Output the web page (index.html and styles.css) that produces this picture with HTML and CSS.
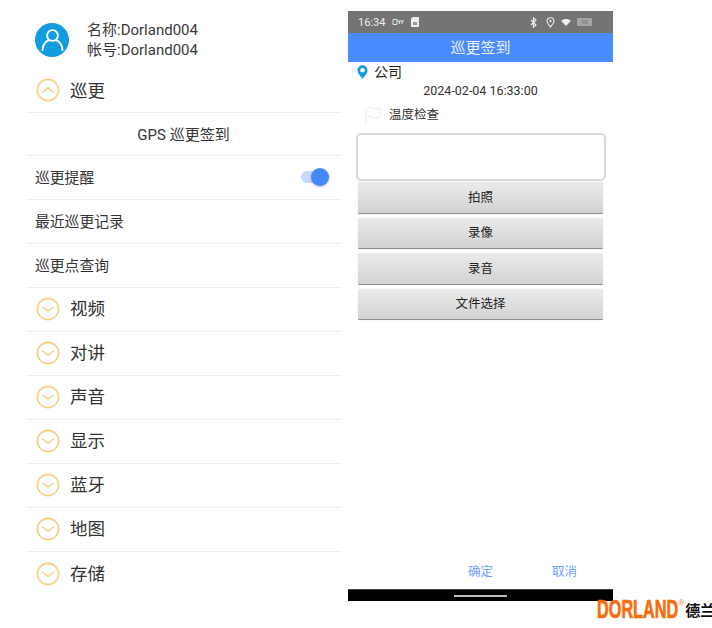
FILE: index.html
```html
<!DOCTYPE html>
<html lang="zh">
<head>
<meta charset="utf-8">
<title>巡更签到</title>
<link rel="stylesheet" href="styles.css">
</head>
<body>
<svg class="defs" width="0" height="0" aria-hidden="true">
  <symbol id="down" viewBox="0 0 24 24"><circle cx="12" cy="12" r="10.6" fill="none" stroke="#f6cf85" stroke-width="1.6"/><path d="M6.5 9.8 12 14.6l5.5-4.8" fill="none" stroke="#f6cf85" stroke-width="1.4"/></symbol>
  <symbol id="up" viewBox="0 0 24 24"><circle cx="12" cy="12" r="10.6" fill="none" stroke="#f6cf85" stroke-width="1.6"/><path d="M6.5 14.4 12 9.6l5.5 4.8" fill="none" stroke="#f6cf85" stroke-width="1.4"/></symbol>
</svg>
<main class="page">
  <section class="menu">
    <header class="profile">
      <svg class="avatar" viewBox="0 0 34 34" width="34" height="34"><circle cx="17" cy="17" r="17" fill="#129bdf"/><circle cx="17.5" cy="12.5" r="5.4" fill="none" stroke="#fff" stroke-width="1.9"/><path d="M7.5 27c.3-5.800 3.800-9.300 6.800-10M27.500 27c-.3-5.800-3.800-9.300-6.800-10" fill="none" stroke="#fff" stroke-width="1.9" stroke-linecap="round"/></svg>
      <div class="account">
        <div>名称:Dorland004</div>
        <div>帐号:Dorland004</div>
      </div>
    </header>
    <div class="group first"><svg class="chev"><use href="#up"/></svg><span>巡更</span></div>
    <div class="item center">GPS 巡更签到</div>
    <div class="item">巡更提醒<span class="switch"><i></i></span></div>
    <div class="item">最近巡更记录</div>
    <div class="item">巡更点查询</div>
    <div class="group"><svg class="chev"><use href="#down"/></svg><span>视频</span></div>
    <div class="group"><svg class="chev"><use href="#down"/></svg><span>对讲</span></div>
    <div class="group"><svg class="chev"><use href="#down"/></svg><span>声音</span></div>
    <div class="group"><svg class="chev"><use href="#down"/></svg><span>显示</span></div>
    <div class="group"><svg class="chev"><use href="#down"/></svg><span>蓝牙</span></div>
    <div class="group"><svg class="chev"><use href="#down"/></svg><span>地图</span></div>
    <div class="group last"><svg class="chev"><use href="#down"/></svg><span>存储</span></div>
  </section>

  <section class="phone">
    <div class="status">
      <span class="time">16:34</span>
      <svg class="st-key" width="13" height="8" viewBox="0 0 13 8"><path d="M1 1.500h4v5H1zM5 3h7M7.500 3v3M10 3v3" fill="none" stroke="#e4e4e4" stroke-width="1"/></svg>
      <svg class="st-sim" width="8" height="10" viewBox="0 0 8 10"><path d="M0 1.500 1.500 0H8v10H0z" fill="#ececec"/><path d="M2 5h4v3H2z" fill="#9a9a9a"/></svg>
      <span class="grow"></span>
      <svg class="st-bt" width="7" height="11" viewBox="0 0 7 11"><path d="M1 3l5 5-2.500 2.200V.8L6 3 1 8" fill="none" stroke="#eee" stroke-width="1.100"/></svg>
      <svg width="9" height="11" viewBox="0 0 9 11"><path d="M4.500 10C2.500 7.500 1 6 1 4.200a3.500 3.500 0 0 1 7 0C8 6 6.500 7.500 4.500 10z" fill="none" stroke="#eee" stroke-width="1.100"/><circle cx="4.500" cy="4.200" r="1.100" fill="#eee"/></svg>
      <svg width="10" height="7" viewBox="0 0 11 8"><path d="M0 2.200C3 -.6 8 -.6 11 2.200L5.500 8z" fill="#eee"/></svg>
      <span class="battery">90</span>
    </div>
    <div class="titlebar">巡更签到</div>
    <div class="place">
      <svg width="11" height="14" viewBox="0 0 11 14"><path d="M5.500 14C2.500 10.200.5 8 .5 5.300a5 5 0 0 1 10 0C10.500 8 8.500 10.200 5.500 14z" fill="#129bdf"/><circle cx="5.500" cy="5.200" r="2.300" fill="#fff"/></svg>
      <span>公司</span>
    </div>
    <div class="datetime">2024-02-04 16:33:00</div>
    <div class="task">
      <svg width="18" height="18" viewBox="0 0 18 20"><path d="M1 20V2c3-2.200 6-1 8-.2s5 1.200 8-.2v9.500c-3 1.400-6 1-8 .2s-5-1.800-8 .4" fill="none" stroke="#eeeeee" stroke-width="1.200"/></svg>
      <span>温度检查</span>
    </div>
    <div class="note"></div>
    <div class="actions">
      <button class="btn">拍照</button>
      <button class="btn">录像</button>
      <button class="btn">录音</button>
      <button class="btn">文件选择</button>
    </div>
    <div class="footer">
      <span class="link">确定</span>
      <span class="link">取消</span>
    </div>
    <div class="navbar"><i></i></div>
  </section>
</main>
<div class="logo"><span class="brand">DORLAND</span><sup class="reg">®</sup><span class="cn">德兰</span></div>
</body>
</html>
```
FILE: styles.css
```css
* { box-sizing: border-box; }
html, body { margin: 0; padding: 0; }
body {
  width: 712px;
  height: 628px;
  overflow: hidden;
  position: relative;
  background: #fff;
  font-family: Roboto, "Noto Sans CJK SC", sans-serif;
  color: #333;
}
.defs { position: absolute; }
.page { display: flex; align-items: flex-start; }

.menu { width: 315px; margin-left: 26px; flex: none; }
.profile {
  height: 68px;
  display: flex;
  align-items: center;
  padding: 12px 0 0 9px;
  gap: 18px;
}
.avatar { flex: none; }
.account { font-size: 15px; line-height: 20px; color: #3a3a3a; }

.group, .item {
  height: 44px;
  display: flex;
  align-items: center;
  padding-bottom: 2px;
  border-bottom: 1px solid #eeeeee;
}
.group { padding-left: 10px; gap: 10px; font-size: 17.500px; color: #333; }
.group span { margin-top: -2px; }
.group.first { height: 45px; padding-bottom: 0; }
.group.last { border-bottom: none; padding-bottom: 1px; }
.chev { width: 24px; height: 24px; flex: none; }
.item { padding-left: 9px; padding-right: 12px; font-size: 14.800px; color: #333; justify-content: space-between; }
.item.center { height: 43px; justify-content: center; padding: 0 0 2px; font-size: 15px; }

.switch {
  position: relative;
  width: 28px;
  height: 12px;
  border-radius: 6px;
  background: #c3d9fd;
  display: block;
}
.switch i {
  position: absolute;
  right: 0;
  top: -3px;
  width: 18px;
  height: 18px;
  border-radius: 50%;
  background: #4588f8;
  box-shadow: 0 1px 2px rgba(0,0,0,.3);
}

.phone {
  width: 265px;
  height: 590px;
  margin: 11px 0 0 7px;
  flex: none;
  display: flex;
  flex-direction: column;
  position: relative;
}
.status {
  height: 22px;
  background: #747474;
  color: #eee;
  display: flex;
  align-items: center;
  padding: 0 21px 0 10px;
  gap: 6px;
  flex: none;
}
.time { font-size: 11px; margin-right: 1px; }
.grow { flex: 1; }
.status svg { flex: none; }
.st-bt { margin-right: 3px; }
.battery {
  width: 15px;
  height: 8px;
  background: #a5a5a5;
  color: #777;
  font-size: 6px;
  line-height: 8px;
  text-align: center;
  border-radius: 1px;
}
.titlebar {
  height: 29px;
  background: #4a8cff;
  color: #e9f1ff;
  font-size: 15px;
  line-height: 30px;
  text-align: center;
  flex: none;
}
.place {
  display: flex;
  align-items: center;
  gap: 6px;
  padding-left: 9px;
  height: 18px;
  font-size: 14px;
  color: #222;
  flex: none;
}
.place svg { margin-top: 1px; }
.datetime { margin-top: 2px; font-size: 12.500px; line-height: 18px; text-align: center; color: #333; flex: none; }
.task {
  display: flex;
  align-items: center;
  gap: 7px;
  margin: 1px 0 0 16px;
  height: 24px;
  font-size: 12.500px;
  color: #333;
  flex: none;
}
.task svg { margin-top: 6px; }
.note {
  margin: 8px 0 0 8px;
  width: 250px;
  height: 48px;
  background: #fff;
  border: 2px solid #d8d8d8;
  border-radius: 5px;
  flex: none;
}
.actions { display: flex; flex-direction: column; gap: 4px; margin: 1px 0 0 10px; width: 245px; }
.btn {
  height: 31.500px;
  border: none;
  border-bottom: 1px solid #8e8e8e;
  border-radius: 1px;
  background: linear-gradient(#ebebeb, #d2d2d2);
  box-shadow: 0 0 1px rgba(0,0,0,.25);
  font: 12.500px Roboto, "Noto Sans CJK SC", sans-serif;
  color: #222;
  padding: 0 0 2px;
}
.footer {
  margin-top: auto;
  height: 36px;
  display: flex;
  padding: 0 36px 0 120px;
  justify-content: space-between;
  align-items: center;
  flex: none;
}
.link { font-size: 12.500px; color: #6ea2ff; margin-top: -2px; }
.navbar {
  height: 12px;
  background: #000;
  border-top: 1px solid #444;
  position: relative;
  flex: none;
  display: flex;
  justify-content: center;
  align-items: center;
}
.navbar i { width: 53px; height: 2px; background: #bdbdbd; display: block; }

.logo {
  position: absolute;
  left: 597px;
  top: 595px;
  width: 115px;
  height: 28px;
  overflow: hidden;
  white-space: nowrap;
  display: flex;
  align-items: center;
}
.brand {
  font: 700 25px "Liberation Sans", sans-serif;
  color: #f56d0f;
  -webkit-text-stroke: .7px #f56d0f;
  display: inline-block;
  transform: scaleX(.65);
  transform-origin: left center;
  width: 81px;
  flex: none;
}
.reg { font-size: 8px; color: #f59a62; margin: -14px 0 0 0; flex: none; }
.cn { font: 700 15px "Noto Sans CJK SC", sans-serif; color: #111; margin-left: 1px; flex: none; }
```
